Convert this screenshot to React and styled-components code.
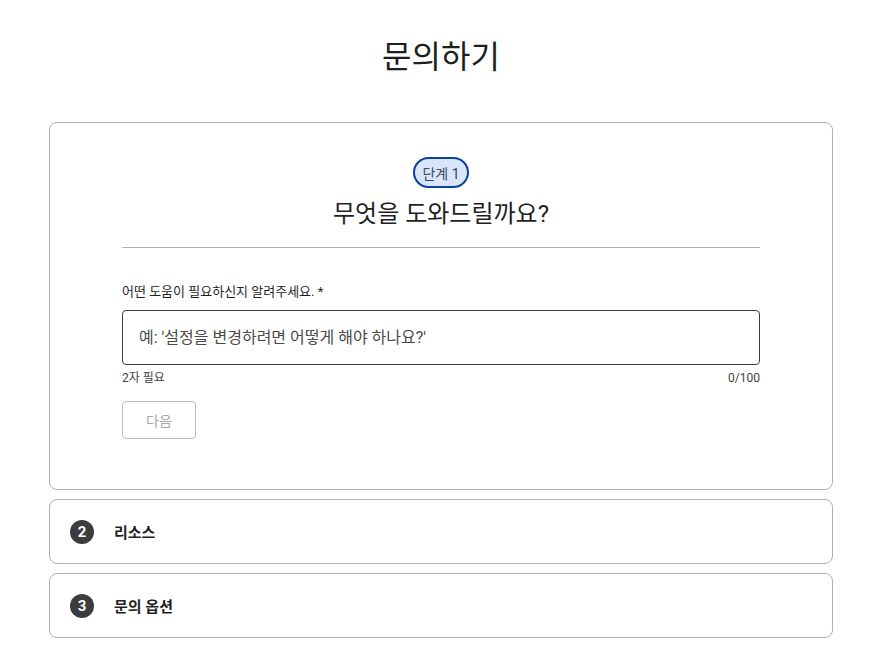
import React, { useState } from 'react'
import styled, { createGlobalStyle } from 'styled-components'

const GlobalStyle = createGlobalStyle`
  html, body {
    margin: 0;
    padding: 0;
    background: #fff;
  }
  body {
    font-family: Roboto, "Noto Sans CJK KR", sans-serif;
    color: #1f1f1f;
  }
`

const Page = styled.div`
  width: 882px;
  display: flex;
  flex-direction: column;
  align-items: center;
`

const Title = styled.h1`
  margin: 33px 0 0;
  height: 56px;
  font-size: 32px;
  font-weight: 400;
  line-height: 48px;
  color: #1f1f1f;
`

const Steps = styled.div`
  margin-top: 33px;
  width: 784px;
  display: flex;
  flex-direction: column;
  gap: 9px;
`

const Card = styled.section`
  box-sizing: border-box;
  border: 1px solid #b0b0b0;
  border-radius: 8px;
  background: #fff;
`

const ActiveCard = styled(Card)`
  padding: 34px 72px 50px;
  display: flex;
  flex-direction: column;
`

const StepHead = styled.div`
  display: flex;
  flex-direction: column;
  align-items: center;
  padding-bottom: 17px;
  border-bottom: 1px solid #b0b0b0;
`

const Badge = styled.span`
  box-sizing: border-box;
  height: 31px;
  padding: 0 7px;
  display: inline-flex;
  align-items: center;
  border: 2px solid #0b3fa0;
  border-radius: 16px;
  background: #d9e5fb;
  color: #3b4a63;
  font-size: 14px;
`

const StepTitle = styled.h2`
  margin: 10px 0 0;
  font-size: 24px;
  font-weight: 400;
  line-height: 32px;
  color: #1f1f1f;
`

const Label = styled.label`
  margin-top: 34px;
  font-size: 13px;
  line-height: 20px;
  color: #1f1f1f;
`

const Field = styled.input`
  box-sizing: border-box;
  margin-top: 8px;
  width: 100%;
  height: 55px;
  padding: 0 16px;
  border: 1px solid #3c3c3c;
  border-radius: 4px;
  font-family: inherit;
  font-size: 16px;
  color: #1f1f1f;
  outline: none;

  &::placeholder {
    color: #4a4a4a;
  }
`

const Helper = styled.div`
  margin-top: 5px;
  display: flex;
  justify-content: space-between;
  font-size: 12px;
  line-height: 16px;
  color: #444;
`

const NextButton = styled.button`
  box-sizing: border-box;
  margin-top: 15px;
  width: 74px;
  height: 38px;
  border: 1px solid #bdbdbd;
  border-radius: 4px;
  background: #fff;
  font-family: inherit;
  font-size: 14px;
  color: #a6a6a6;
  align-self: flex-start;
`

const CollapsedCard = styled(Card)`
  height: 65px;
  padding: 0 20px;
  display: flex;
  align-items: center;
  gap: 20px;
`

const StepNumber = styled.span`
  width: 24px;
  height: 24px;
  border-radius: 50%;
  background: #3c3c3c;
  color: #fff;
  font-size: 15px;
  font-weight: 700;
  display: flex;
  align-items: center;
  justify-content: center;
`

const StepName = styled.span`
  font-size: 15px;
  font-weight: 700;
  color: #1f1f1f;
`

const laterSteps = [
  { n: 2, name: '리소스' },
  { n: 3, name: '문의 옵션' }
]

export default function App () {
  const [text, setText] = useState('')

  return (
    <Page>
      <GlobalStyle />
      <Title>문의하기</Title>
      <Steps>
        <ActiveCard>
          <StepHead>
            <Badge>단계 1</Badge>
            <StepTitle>무엇을 도와드릴까요?</StepTitle>
          </StepHead>
          <Label htmlFor='question'>어떤 도움이 필요하신지 알려주세요. *</Label>
          <Field
            id='question'
            value={text}
            maxLength={100}
            onChange={e => setText(e.target.value)}
            placeholder="예: '설정을 변경하려면 어떻게 해야 하나요?'"
          />
          <Helper>
            <span>2자 필요</span>
            <span>{text.length}/100</span>
          </Helper>
          <NextButton disabled>다음</NextButton>
        </ActiveCard>
        {laterSteps.map(step => (
          <CollapsedCard key={step.n}>
            <StepNumber>{step.n}</StepNumber>
            <StepName>{step.name}</StepName>
          </CollapsedCard>
        ))}
      </Steps>
    </Page>
  )
}
